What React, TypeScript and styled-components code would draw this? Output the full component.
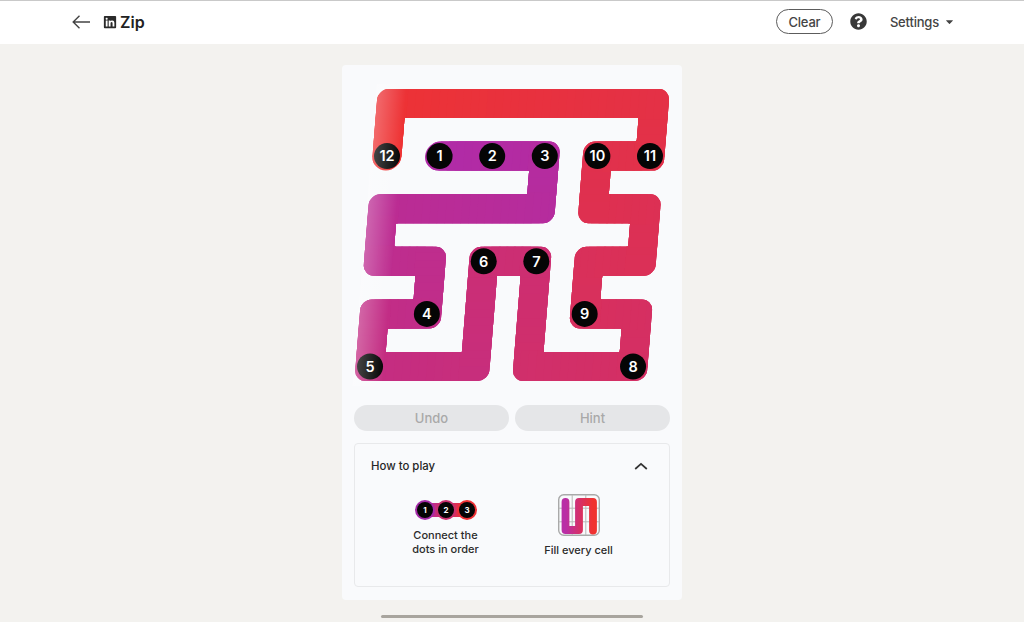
import React from "react";
import styled, { createGlobalStyle } from "styled-components";
import { FaLinkedin, FaQuestionCircle } from "react-icons/fa";

const Global = createGlobalStyle`
  html, body { margin: 0; padding: 0; background: #f3f2ef; }
  body { font-family: Inter, "Liberation Sans", sans-serif; overflow: hidden; }
`;

const Page = styled.div`
  position: relative;
  width: 1024px;
  height: 622px;
  overflow: hidden;
  background: #f3f2ef;
`;

const TopBar = styled.header`
  display: flex;
  align-items: center;
  height: 41px;
  padding: 0 71px 2px 72px;
  background: #fff;
  border-top: 1px solid #c9c9c9;
  box-sizing: content-box;
`;

const BackIcon = styled.svg`
  width: 18px;
  height: 14px;
  color: #444;
  margin-right: 13px;
`;

const Logo = styled.span`
  display: flex;
  color: #2a2a2a;
  margin-right: 3px;
`;

const Title = styled.h1`
  margin: 0;
  font-size: 16px;
  line-height: 22px;
  font-weight: 600;
  color: #222;
`;

const Spacer = styled.div`
  flex: 1;
`;

const ClearButton = styled.button`
  width: 57px;
  height: 25px;
  border: 1px solid #5c5c5c;
  border-radius: 13px;
  background: #fff;
  color: #444;
  font: 500 13px Inter, sans-serif;
  letter-spacing: -0.2px;
  padding: 0;
  margin-right: 17px;
`;

const HelpIcon = styled.span`
  display: flex;
  color: #383838;
  margin-right: 23px;
`;

const SettingsLink = styled.div`
  display: flex;
  align-items: center;
  gap: 7px;
  color: #444;
  font-size: 13px;
  font-weight: 500;
  letter-spacing: -0.2px;
`;

const Caret = styled.svg`
  width: 7px;
  height: 4px;
  color: #444;
`;

const Card = styled.main`
  width: 340px;
  height: 535px;
  margin: 21px auto 0;
  background: #f9fafc;
  border-radius: 4px;
  display: flex;
  flex-direction: column;
`;

const BoardSvg = styled.svg`
  display: block;
  width: 340px;
  height: 328px;
  flex: none;
`;

const Actions = styled.div`
  display: flex;
  gap: 6px;
  padding: 12px 12px 0;
`;

const ActionButton = styled.button`
  flex: 1;
  height: 26px;
  padding: 0;
  border: 0;
  border-radius: 13px;
  background: #e5e6e8;
  color: #a9a9a9;
  font: 500 13px Inter, sans-serif;
`;

const HowTo = styled.section`
  margin: 12px 12px 0;
  height: 144px;
  box-sizing: border-box;
  border: 1px solid #e8e9eb;
  border-radius: 4px;
`;

const HowToHeader = styled.div`
  display: flex;
  align-items: center;
  justify-content: space-between;
  height: 44px;
  padding: 0 21px 0 16px;
  font-size: 11.4px;
  font-weight: 500;
  color: #262626;
`;

const Chevron = styled.svg`
  width: 14px;
  height: 8px;
  color: #333;
`;

const Steps = styled.div`
  display: flex;
  justify-content: center;
  gap: 33px;
  padding-top: 5px;
`;

const Step = styled.div`
  width: 100px;
  display: flex;
  flex-direction: column;
  align-items: center;
  text-align: center;
  font-size: 11px;
  font-weight: 550;
  line-height: 14px;
  color: #2b2b2b;
`;

const DotsIcon = styled.svg`
  width: 66px;
  height: 24px;
  margin: 5px 0 6px;
`;

const GridIcon = styled.svg`
  width: 44px;
  height: 44px;
  margin-bottom: 6px;
`;

const ScrollThumb = styled.div`
  position: absolute;
  left: 381px;
  top: 615px;
  width: 262px;
  height: 3px;
  border-radius: 2px;
  background: #a8a59e;
`;

type P = [number, number];
const cx = (c: number) => 387 + 52.6 * c;
const cy = (r: number) => 103.5 + 52.6 * r;
const SKEW = -0.0806;
const sx = (x: number, y: number) => x + SKEW * (y - 156);

const cells: P[] = [
  [1, 1], [3, 1], [3, 2], [0, 2], [0, 3], [1, 3], [1, 4], [0, 4], [0, 5], [2, 5], [2, 3],
  [3, 3], [3, 5], [5, 5], [5, 4], [4, 4], [4, 3], [5, 3], [5, 2], [4, 2], [4, 1], [5, 1],
  [5, 0], [0, 0], [0, 1],
];
const line: P[] = cells.map(([c, r]) => [cx(c), cy(r)]);

const dots: { n: number; c: number; r: number }[] = [
  { n: 1, c: 1, r: 1 }, { n: 2, c: 2, r: 1 }, { n: 3, c: 3, r: 1 }, { n: 4, c: 1, r: 4 },
  { n: 5, c: 0, r: 5 }, { n: 6, c: 2, r: 3 }, { n: 7, c: 3, r: 3 }, { n: 8, c: 5, r: 5 },
  { n: 9, c: 4, r: 4 }, { n: 10, c: 4, r: 1 }, { n: 11, c: 5, r: 1 }, { n: 12, c: 0, r: 1 },
];

function unit(a: P, b: P): P {
  const l = Math.hypot(b[0] - a[0], b[1] - a[1]);
  return [(b[0] - a[0]) / l, (b[1] - a[1]) / l];
}

function side(pts: P[], h: number, R: number): string[] {
  const out: string[] = [];
  pts.forEach((p, i) => {
    if (i === 0 || i === pts.length - 1) {
      const d = i === 0 ? unit(p, pts[1]) : unit(pts[i - 1], p);
      out.push(`L${p[0] + d[1] * h} ${p[1] - d[0] * h}`);
      return;
    }
    const d1 = unit(pts[i - 1], p);
    const d2 = unit(p, pts[i + 1]);
    const c: P = [p[0] + (d1[1] + d2[1]) * h, p[1] - (d1[0] + d2[0]) * h];
    if (d1[0] * d2[1] - d1[1] * d2[0] > 0) {
      out.push(`L${c[0] - d1[0] * R} ${c[1] - d1[1] * R}`);
      out.push(`A${R} ${R} 0 0 1 ${c[0] + d2[0] * R} ${c[1] + d2[1] * R}`);
    } else {
      out.push(`L${c[0]} ${c[1]}`);
    }
  });
  return out;
}

function outline(pts: P[], w: number, R: number): string {
  const h = w / 2;
  const a = side(pts, h, R);
  const b = side([...pts].reverse(), h, R);
  const arc = (s: string) => `A${h} ${h} 0 0 1 ${s.slice(1)}`;
  return `M${a[0].slice(1)} ${a.slice(1).join(" ")} ${arc(b[0])} ${b.slice(1).join(" ")} ${arc(a[0])} Z`;
}

const START = [0xb0, 0x2b, 0xa8];
const END = [0xee, 0x32, 0x33];
const mix = (t: number) =>
  `rgb(${START.map((s, i) => Math.round(s + (END[i] - s) * t)).join(",")})`;

function pieces(pts: P[]) {
  const lens = pts.slice(1).map((p, i) => Math.hypot(p[0] - pts[i][0], p[1] - pts[i][1]));
  const total = lens.reduce((a, b) => a + b, 0);
  const out: { a: P; b: P; color: string }[] = [];
  let run = 0;
  lens.forEach((l, i) => {
    const n = Math.max(1, Math.round(l / 8));
    for (let k = 0; k < n; k++) {
      const f0 = k / n;
      const f1 = (k + 1) / n;
      const p = pts[i];
      const q = pts[i + 1];
      out.push({
        a: [p[0] + (q[0] - p[0]) * f0, p[1] + (q[1] - p[1]) * f0],
        b: [p[0] + (q[0] - p[0]) * f1, p[1] + (q[1] - p[1]) * f1],
        color: mix((run + l * (f0 + f1) * 0.5) / total),
      });
    }
    run += l;
  });
  return out;
}

function Board() {
  const matrix = `matrix(1 0 ${SKEW} 1 ${-SKEW * 156} 0)`;
  return (
    <BoardSvg viewBox="342 65 340 328" aria-label="Zip board">
      <defs>
        <clipPath id="snake">
          <path d={outline(line, 29, 11)} />
        </clipPath>
        <linearGradient id="glare" x1="0" x2="1" y1="0" y2="0">
          <stop offset="0" stopColor="#fff" stopOpacity="0.28" />
          <stop offset="1" stopColor="#fff" stopOpacity="0" />
        </linearGradient>
      </defs>
      <g transform={matrix}>
        <g clipPath="url(#snake)">
          {pieces(line).map((s, i) => (
            <line
              key={i}
              x1={s.a[0]}
              y1={s.a[1]}
              x2={s.b[0]}
              y2={s.b[1]}
              stroke={s.color}
              strokeWidth={32}
              strokeLinecap="square"
            />
          ))}
        </g>
      </g>
      {dots.map((d) => {
        const y = cy(d.r);
        const x = sx(cx(d.c), y);
        return (
          <g key={d.n}>
            <circle cx={x} cy={y} r={13} fill="#050505" />
            <text
              x={x}
              y={y + 5.2}
              textAnchor="middle"
              fontFamily="Inter, sans-serif"
              fontSize={14.5}
              fontWeight={600}
              fill="#fff"
            >
              {d.n}
            </text>
          </g>
        );
      })}
      <g transform={matrix}>
        <rect x={371} y={84} width={30} height={302} fill="url(#glare)" />
      </g>
    </BoardSvg>
  );
}

function DotsGlyph() {
  const items = [
    { x: 12, n: 1, ring: "#a52ba8" },
    { x: 33, n: 2, ring: "#c9306f" },
    { x: 54, n: 3, ring: "#ee3135" },
  ];
  return (
    <DotsIcon viewBox="0 0 66 24">
      <defs>
        <linearGradient id="dotline" x1="0" x2="1" y1="0" y2="0">
          <stop offset="0" stopColor="#b02ba8" />
          <stop offset="1" stopColor="#f0312f" />
        </linearGradient>
      </defs>
      <rect x="6" y="5" width="54" height="14" fill="url(#dotline)" />
      {items.map((d) => (
        <g key={d.n}>
          <circle cx={d.x} cy={12} r={10} fill={d.ring} />
          <circle cx={d.x} cy={12} r={8} fill="#050505" />
          <text
            x={d.x}
            y={14.8}
            textAnchor="middle"
            fontFamily="Inter, sans-serif"
            fontSize={8}
            fontWeight={700}
            fill="#fff"
          >
            {d.n}
          </text>
        </g>
      ))}
    </DotsIcon>
  );
}

function GridGlyph() {
  return (
    <GridIcon viewBox="1 1 44 44">
      <defs>
        <linearGradient id="fillline" x1="0" x2="1" y1="0" y2="0">
          <stop offset="0" stopColor="#b92ea6" />
          <stop offset="1" stopColor="#f0322f" />
        </linearGradient>
      </defs>
      <rect x="2.7" y="2.7" width="40.6" height="40.6" rx="5" fill="none" stroke="#a9a9a9" strokeWidth="1.4" />
      <path d="M16.2 3V43M29.8 3V43M3 16.2H43M3 29.8H43" stroke="#b8b8b8" strokeWidth="1" fill="none" />
      <path
        d="M9.5 10V38H23V10H37V38.5"
        fill="none"
        stroke="url(#fillline)"
        strokeWidth="7.8"
        strokeLinecap="round"
        strokeLinejoin="round"
      />
    </GridIcon>
  );
}

export default function App() {
  return (
    <Page>
      <Global />
      <TopBar>
        <BackIcon viewBox="0 0 18 14" fill="none" stroke="currentColor" strokeWidth="1.4">
          <path d="M18 7H1.2M7.5 0.8L1.2 7l6.3 6.2" />
        </BackIcon>
        <Logo>
          <FaLinkedin size={14} />
        </Logo>
        <Title>Zip</Title>
        <Spacer />
        <ClearButton>Clear</ClearButton>
        <HelpIcon>
          <FaQuestionCircle size={17} />
        </HelpIcon>
        <SettingsLink>
          Settings
          <Caret viewBox="0 0 9 5" fill="currentColor" preserveAspectRatio="none">
            <path d="M0.6 0.2h7.8a.5 .5 0 0 1 .35 .85L5 4.6a.7 .7 0 0 1-1 0L.25 1.05A.5 .5 0 0 1 .6 .2z" />
          </Caret>
        </SettingsLink>
      </TopBar>
      <Card>
        <Board />
        <Actions>
          <ActionButton disabled>Undo</ActionButton>
          <ActionButton disabled>Hint</ActionButton>
        </Actions>
        <HowTo>
          <HowToHeader>
            How to play
            <Chevron viewBox="0 0 14 8" fill="none" stroke="currentColor" strokeWidth="1.7">
              <path d="M1.2 7L7 1.8 12.8 7" />
            </Chevron>
          </HowToHeader>
          <Steps>
            <Step>
              <DotsGlyph />
              <span>
                Connect the
                <br />
                dots in order
              </span>
            </Step>
            <Step>
              <GridGlyph />
              <span>Fill every cell</span>
            </Step>
          </Steps>
        </HowTo>
      </Card>
      <ScrollThumb />
    </Page>
  );
}
